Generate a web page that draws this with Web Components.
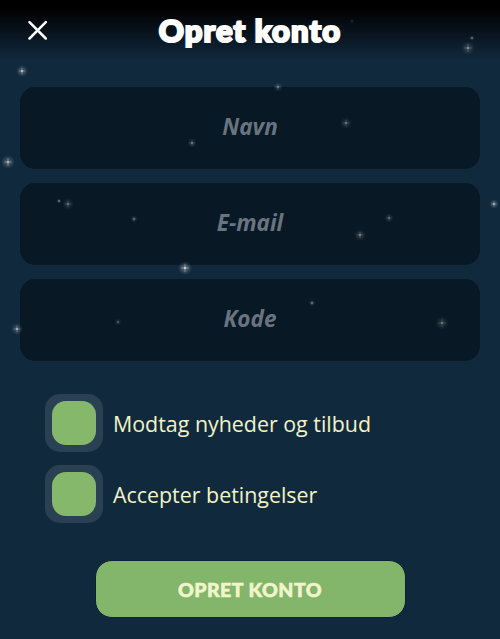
<!DOCTYPE html>
<html lang="da">
<head>
<meta charset="utf-8">
<title>Opret konto</title>
<style>
  html, body { margin: 0; height: 100%; background: #11293d; }
  body { font-family: "Open Sans", sans-serif; overflow: hidden; }
</style>
</head>
<body>
<signup-screen>
  <star-field slot="stars"></star-field>
  <top-bar slot="bar">Opret konto</top-bar>
  <text-field>Navn</text-field>
  <text-field>E-mail</text-field>
  <text-field>Kode</text-field>
  <check-row slot="checks">Modtag nyheder og tilbud</check-row>
  <check-row slot="checks">Accepter betingelser</check-row>
  <big-button slot="action">OPRET KONTO</big-button>
</signup-screen>

<script>
class SignupScreen extends HTMLElement {
  connectedCallback() {
    this.attachShadow({ mode: 'open' });
    this.shadowRoot.innerHTML = `
      <style>
        :host { display: block; position: relative; width: 500px; height: 639px; overflow: hidden; background: #11293d; }
        .fields { display: flex; flex-direction: column; gap: 14px; padding: 27px 20px 0; }
        .checks { display: flex; flex-direction: column; gap: 13px; padding: 33px 45px 0; }
        .action { display: flex; justify-content: center; padding-top: 37px; }
      </style>
      <slot name="bar"></slot>
      <div class="fields"><slot></slot></div>
      <div class="checks"><slot name="checks"></slot></div>
      <div class="action"><slot name="action"></slot></div>
      <slot name="stars"></slot>
    `;
  }
}

class TopBar extends HTMLElement {
  connectedCallback() {
    this.attachShadow({ mode: 'open' });
    this.shadowRoot.innerHTML = `
      <style>
        :host { display: block; height: 60px; background: linear-gradient(#000 0, #000 8px, #11293d 60px); }
        .bar { position: relative; display: flex; align-items: center; justify-content: center; height: 60px; }
        h1 {
          margin: 0; font: 900 31px/1 Lato, sans-serif; color: #fff; letter-spacing: 1.1px;
          -webkit-text-stroke: 2.2px #fff;
        }
        svg { position: absolute; left: 27px; top: 20px; width: 21px; height: 20px; }
      </style>
      <div class="bar">
        <svg viewBox="0 0 21 20" fill="none" stroke="#fff" stroke-width="2.5" stroke-linecap="round">
          <path d="M2.500 2.200 18.800 18.500M18.800 2.200 2.500 18.500"/>
        </svg>
        <h1><slot></slot></h1>
      </div>
    `;
  }
}

class TextField extends HTMLElement {
  connectedCallback() {
    this.attachShadow({ mode: 'open' });
    this.shadowRoot.innerHTML = `
      <style>
        :host {
          display: flex; align-items: center; justify-content: center; height: 82px;
          box-sizing: border-box; padding-bottom: 3px;
          background: #081824; border-radius: 15px;
          font: italic 700 22.5px "Open Sans", sans-serif; color: #68747f;
        }
      </style>
      <slot></slot>
    `;
  }
}

class CheckRow extends HTMLElement {
  connectedCallback() {
    this.attachShadow({ mode: 'open' });
    this.shadowRoot.innerHTML = `
      <style>
        :host { display: flex; align-items: center; gap: 10px; font: 400 21.4px "Open Sans", sans-serif; color: #f1f3c6; }
        .box { width: 58px; height: 58px; box-sizing: border-box; padding: 7px; background: #2a4053; border-radius: 15px; }
        .box i { display: block; height: 100%; background: #86b86c; border-radius: 14px; }
      </style>
      <div class="box"><i></i></div>
      <span><slot></slot></span>
    `;
  }
}

class BigButton extends HTMLElement {
  connectedCallback() {
    this.attachShadow({ mode: 'open' });
    this.shadowRoot.innerHTML = `
      <style>
        :host {
          display: flex; align-items: center; justify-content: center; width: 311px; height: 58px;
          box-sizing: border-box; background: #83b56a; border: 1px solid #0b2038; border-radius: 17px;
          font: 900 19.5px Lato, sans-serif; color: #f1f5cc; letter-spacing: .5px;
          -webkit-text-stroke: .6px #f1f5cc;
        }
      </style>
      <slot></slot>
    `;
  }
}

// x, y, glow radius, opacity
const STARS = [
  [22,71,6,.7],[8,162,7,.7],[278,87,5,.35],[346,123,6,.35],[192,143,5,.35],
  [468,48,7,.45],[472,38,3,.3],[352,21,3,.1],[59,201,3,.3],[68,204,6,.35],
  [134,219,4,.3],[389,218,5,.3],[360,235,6,.4],[494,204,5,.6],[185,268,7,.85],
  [312,303,4,.3],[118,322,4,.22],[17,329,6,.6],[442,323,7,.35]
];

class StarField extends HTMLElement {
  connectedCallback() {
    this.attachShadow({ mode: 'open' });
    const dots = STARS.map(([x, y, r, o]) => `
      <circle cx="${x}" cy="${y}" r="${r}" fill="url(#glow)" opacity="${o}"/>
      <path d="M${x - r * .55} ${y}H${x + r * .55}M${x} ${y - r * .55}V${y + r * .55}" stroke="#fff" stroke-width=".7" opacity="${o * .6}"/>
      <circle cx="${x}" cy="${y}" r="1" fill="#fff" opacity="${o * .8}"/>`).join('');
    this.shadowRoot.innerHTML = `
      <style>
        :host { position: absolute; inset: 0; pointer-events: none; display: block; }
        svg { display: block; filter: blur(.45px); }
      </style>
      <svg width="500" height="639" viewBox="0 0 500 639">
        <defs>
          <radialGradient id="glow">
            <stop offset="0" stop-color="#fff" stop-opacity=".4"/>
            <stop offset="1" stop-color="#fff" stop-opacity="0"/>
          </radialGradient>
        </defs>
        ${dots}
      </svg>
    `;
  }
}

customElements.define('signup-screen', SignupScreen);
customElements.define('top-bar', TopBar);
customElements.define('text-field', TextField);
customElements.define('check-row', CheckRow);
customElements.define('big-button', BigButton);
customElements.define('star-field', StarField);
</script>
</body>
</html>
